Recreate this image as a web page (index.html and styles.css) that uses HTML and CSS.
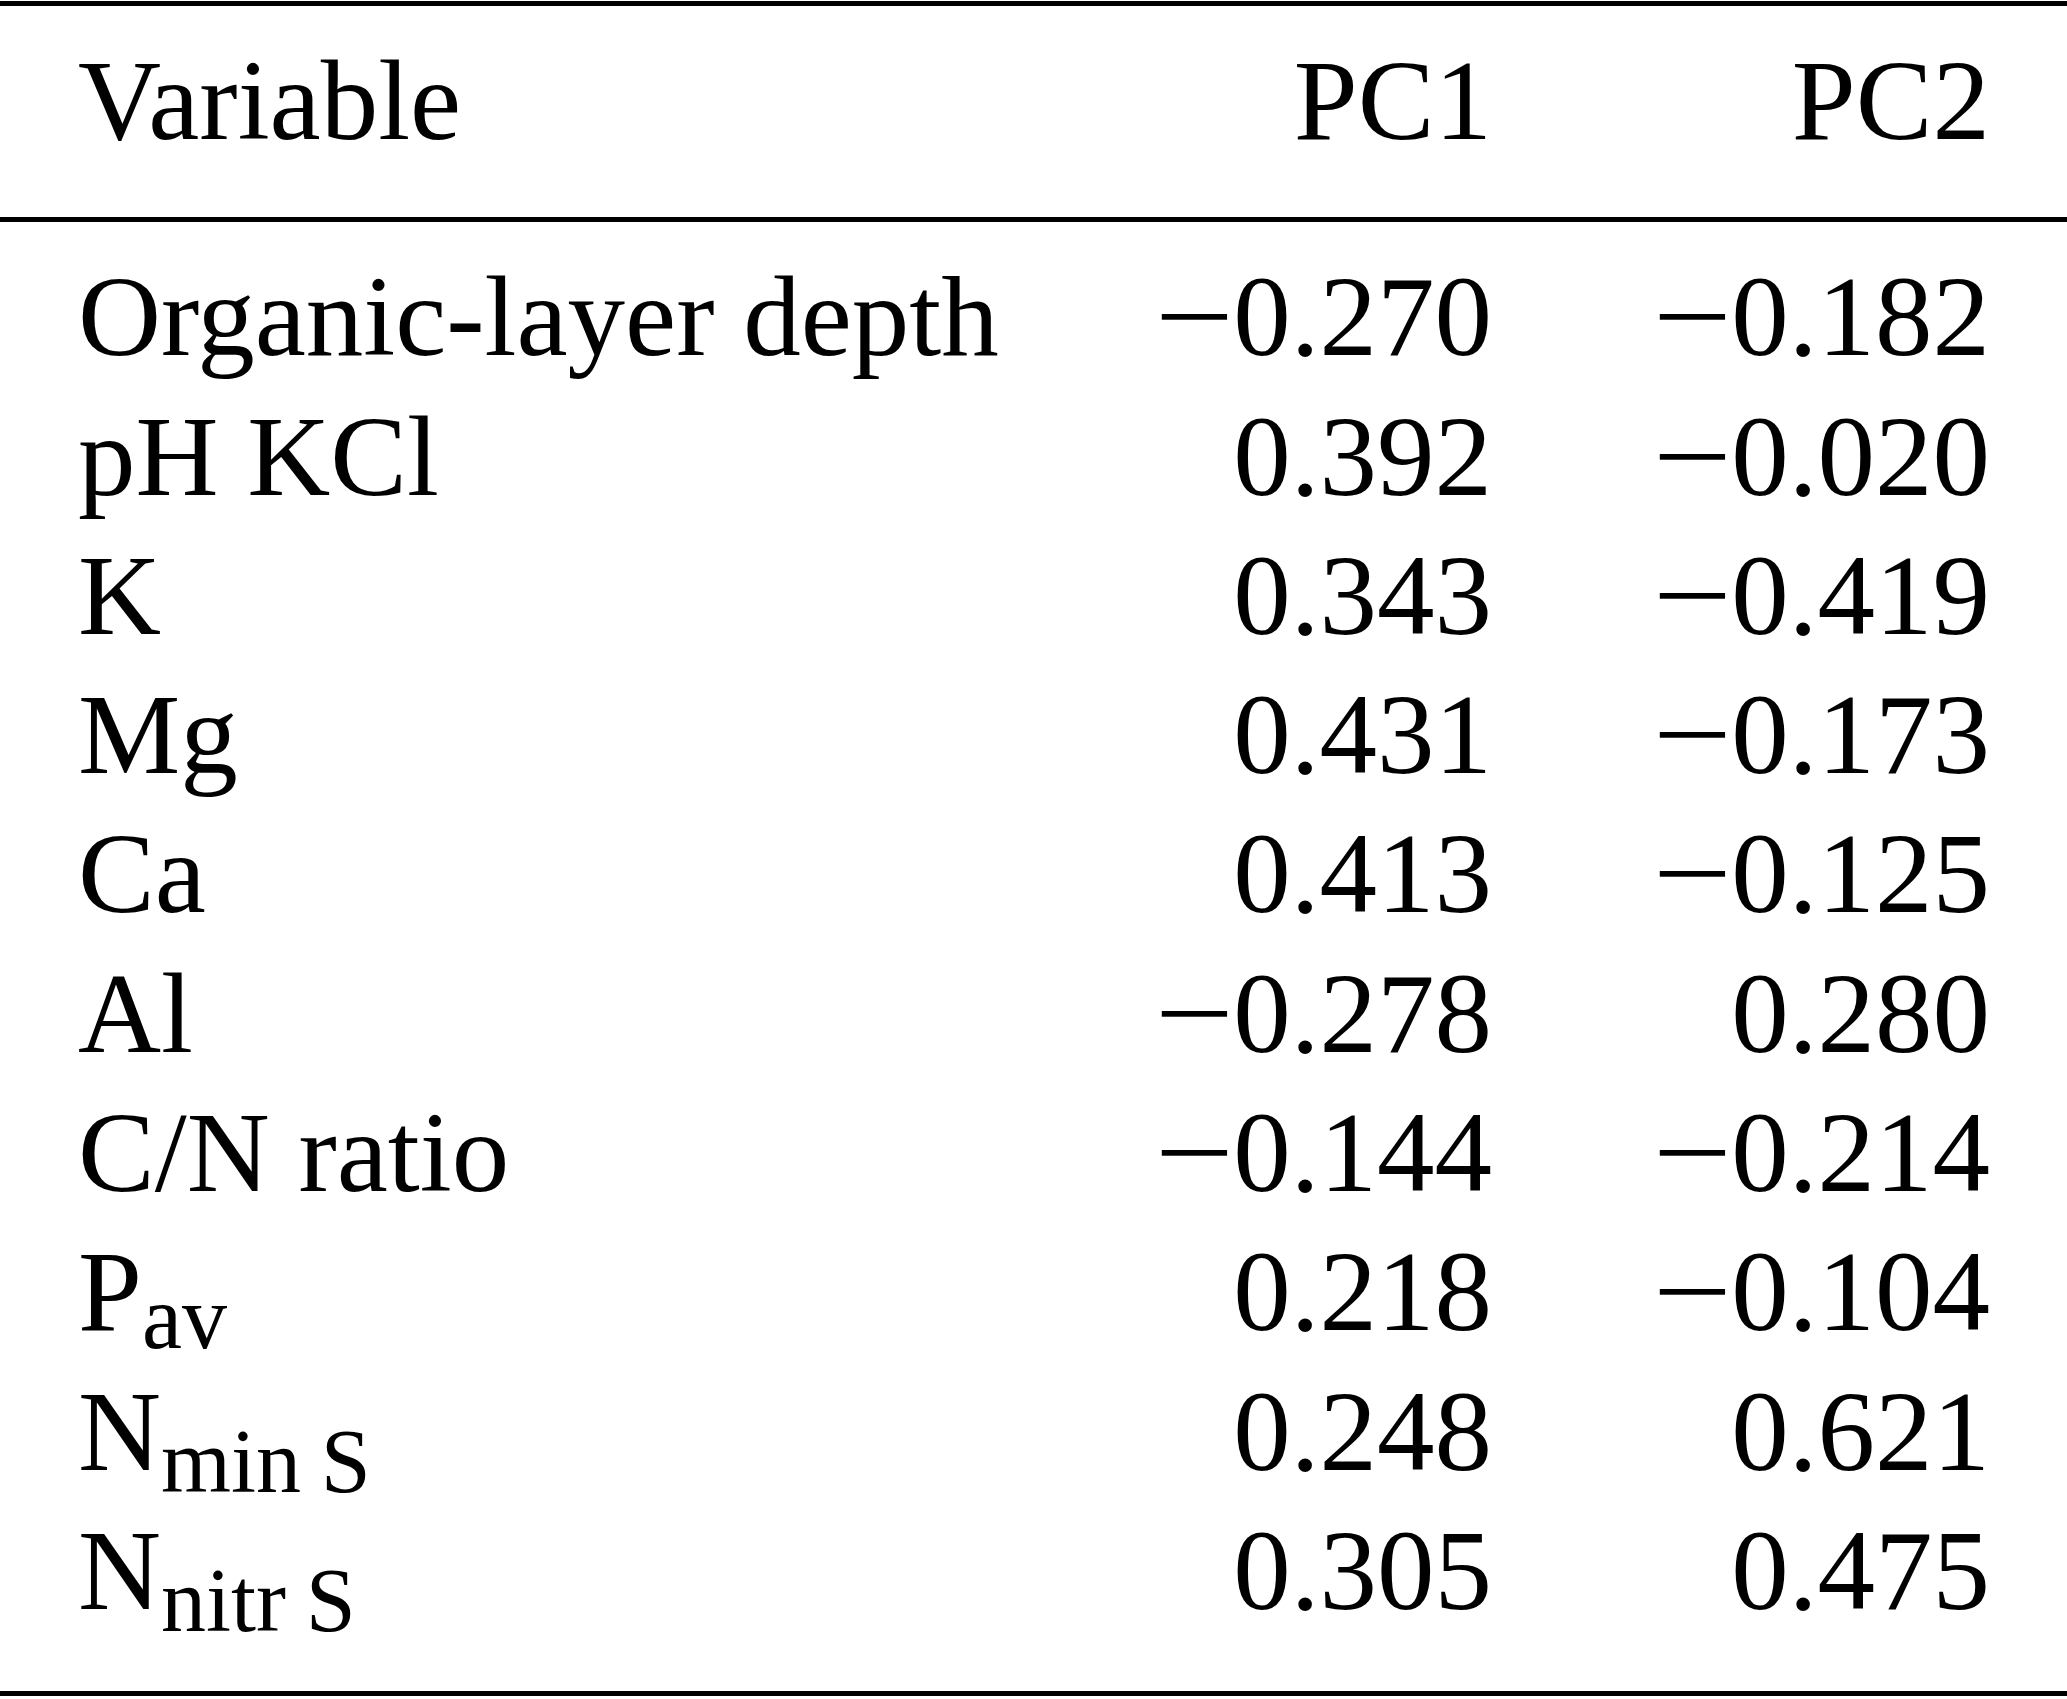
FILE: index.html
```html
<!DOCTYPE html>
<html lang="en">
<head>
<meta charset="utf-8">
<title>PCA loadings</title>
<link rel="stylesheet" href="styles.css">
</head>
<body>
<table class="pca">
  <thead>
    <tr><th class="var">Variable</th><th class="num pc1">PC1</th><th class="num pc2">PC2</th></tr>
  </thead>
  <tbody>
    <tr><td class="var">Organic-layer depth</td><td class="num"><span class="neg">−</span>0.270</td><td class="num pc2"><span class="neg">−</span>0.182</td></tr>
    <tr><td class="var">pH KCl</td><td class="num">0.392</td><td class="num pc2"><span class="neg">−</span>0.020</td></tr>
    <tr><td class="var">K</td><td class="num">0.343</td><td class="num pc2"><span class="neg">−</span>0.419</td></tr>
    <tr><td class="var">Mg</td><td class="num">0.431</td><td class="num pc2"><span class="neg">−</span>0.173</td></tr>
    <tr><td class="var">Ca</td><td class="num">0.413</td><td class="num pc2"><span class="neg">−</span>0.125</td></tr>
    <tr><td class="var">Al</td><td class="num"><span class="neg">−</span>0.278</td><td class="num pc2">0.280</td></tr>
    <tr><td class="var">C/N ratio</td><td class="num"><span class="neg">−</span>0.144</td><td class="num pc2"><span class="neg">−</span>0.214</td></tr>
    <tr><td class="var">P<sub>av</sub></td><td class="num">0.218</td><td class="num pc2"><span class="neg">−</span>0.104</td></tr>
    <tr><td class="var">N<sub class="deep">min S</sub></td><td class="num">0.248</td><td class="num pc2">0.621</td></tr>
    <tr><td class="var">N<sub class="deep">nitr S</sub></td><td class="num">0.305</td><td class="num pc2">0.475</td></tr>
  </tbody>
</table>
</body>
</html>
```

FILE: styles.css
```css
* {
  box-sizing: border-box;
}

html,
body {
  margin: 0;
  background: #ffffff;
}

body {
  padding-top: 1px;
}

.pca {
  width: 2067px;
  table-layout: fixed;
  border-collapse: separate;
  border-spacing: 0;
  border-top: 5px solid #000000;
  border-bottom: 5px solid #000000;
  font-family: "Liberation Serif", "Times New Roman", serif;
  font-size: 115px;
  line-height: 139.3px;
  color: #000000;
}

.pca th,
.pca td {
  padding: 0;
  font-weight: normal;
  white-space: nowrap;
}

.pca thead th {
  padding-top: 25px;
  padding-bottom: 47px;
  border-bottom: 5px solid #000000;
}

.pca tbody tr:first-child td {
  padding-top: 25px;
}

.pca tbody tr:last-child td {
  padding-bottom: 51px;
}

.pca .var {
  text-align: left;
  padding-left: 78px;
}

.pca th.var {
  width: 1000px;
}

.pca th.pc1 {
  width: 492px;
}

.pca th.pc2 {
  width: 575px;
}

.pca .num {
  text-align: right;
}

.pca .pc2 {
  padding-right: 77px;
}

.neg {
  display: inline-block;
  transform: scaleX(1.22);
  transform-origin: left center;
  margin-right: 0.12em;
}

.pca sub {
  font-size: 90px;
  line-height: 0;
  vertical-align: -18px;
  word-spacing: -0.03em;
}

.pca sub.deep {
  vertical-align: -22px;
}
```
